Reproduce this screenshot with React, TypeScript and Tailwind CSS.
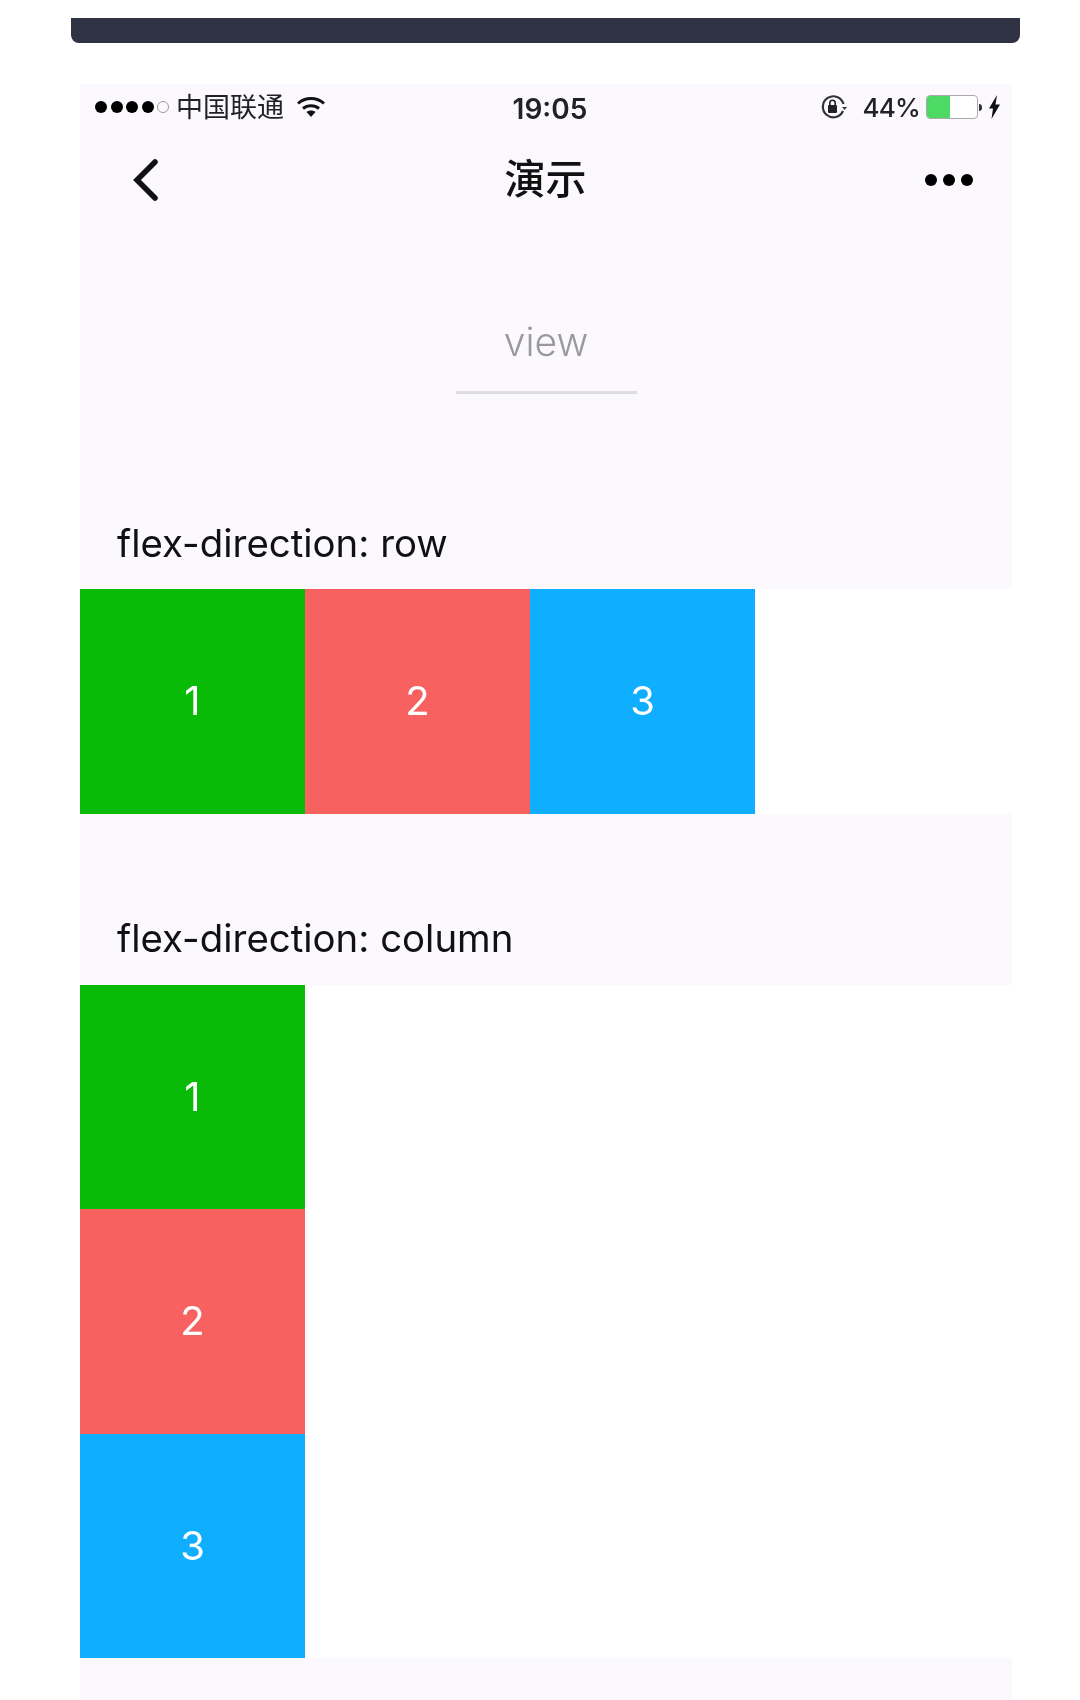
const cjk = "font-['Inter','Noto_Sans_CJK_SC',sans-serif]";

function Signal() {
	return (
		<div className="flex items-center gap-[3.5px]">
			{[0, 1, 2, 3].map((i) => (
				<span key={i} className="h-[12px] w-[12px] rounded-full bg-black" />
			))}
			<span className="h-[12px] w-[12px] rounded-full border border-[#999]" />
		</div>
	);
}

function Wifi() {
	return (
		<svg width="30" height="24" viewBox="0 0 30 24" fill="none" stroke="#111" strokeWidth="3">
			<path d="M2 8.5C9.5 1.8 20.5 1.8 28 8.5" />
			<path d="M7 13.5C11.5 9.8 18.5 9.8 23 13.5" />
			<path d="M15 22l-4.5-5c2.6-2 6.4-2 9 0z" fill="#111" stroke="none" />
		</svg>
	);
}

function RotationLock() {
	return (
		<svg width="28" height="26" viewBox="0 0 28 26" fill="none">
			<path d="M23 17A10.5 10.5 0 1 1 23.5 10" stroke="#333" strokeWidth="2.2" />
			<path d="M22 13h5l-2.5 3z" fill="#333" />
			<rect x="8" y="11" width="9" height="8" rx="1" fill="#222" />
			<path d="M9.8 11V9a2.7 2.7 0 0 1 5.4 0v2" stroke="#222" strokeWidth="1.6" />
		</svg>
	);
}

function Battery() {
	return (
		<div className="flex items-center">
			<div className="h-[24px] w-[52px] overflow-hidden rounded-[4px] border border-[#aaa] bg-white">
				<div className="h-full w-[23px] bg-[#4cd964]" />
			</div>
			<span className="ml-[1px] h-[7px] w-[3px] rounded-r-full bg-[#333]" />
		</div>
	);
}

function Bolt() {
	return (
		<svg width="13" height="24" viewBox="0 0 13 24" fill="#111">
			<path d="M9 0 1 13.5h4L3.5 24 12 9.5H7.5z" />
		</svg>
	);
}

function Cell({ n, color }: { n: number; color: string }) {
	return (
		<div className={`flex h-[224.5px] w-[225px] items-center justify-center text-[40px] text-white ${color}`}>
			<span className="blur-[0.3px]">{n}</span>
		</div>
	);
}

const cells = [
	{ n: 1, color: "bg-[#09bb07]" },
	{ n: 2, color: "bg-[#f76260]" },
	{ n: 3, color: "bg-[#10aeff]" },
];

export default function App() {
	return (
		<div className={`h-[1700px] overflow-hidden bg-white pt-[18px] ${cjk}`}>
			<div className="mx-[60px] ml-[71px] h-[25px] w-[949px] rounded-b-[8px] bg-[#2f3242]" />

			<div className="mt-[41px] ml-[80px] h-[1616px] w-[932px] bg-[#fbf9fe]">
				<div className="flex h-[46px] items-center justify-between pr-[11px] pl-[15px] blur-[0.4px]">
					<div className="flex w-[320px] items-center gap-[7px]">
						<Signal />
						<span className="text-[27px] leading-none text-[#222]">中国联通</span>
						<span className="ml-[5px]"><Wifi /></span>
					</div>
					<span className="mt-[3px] ml-[4px] text-[28px] font-semibold text-[#222]">19:05</span>
					<div className="flex w-[320px] items-center justify-end">
						<RotationLock />
						<span className="mr-[6px] ml-[14px] text-[26px] font-medium tracking-[-0.8px] text-[#222]">44%</span>
						<Battery />
						<span className="ml-[6px]"><Bolt /></span>
					</div>
				</div>

				<div className="flex h-[98px] items-center justify-between pt-[1px] pr-[39px] pl-[52px]">
					<div className="w-[100px]">
						<svg width="26" height="42" viewBox="0 0 26 42" fill="none" stroke="#111" strokeWidth="5.5" strokeLinecap="round">
							<path d="M23 3 5 21l18 18" />
						</svg>
					</div>
					<span className="ml-[-14px] text-[41px] leading-none font-medium text-[#111] blur-[0.4px]">演示</span>
					<div className="flex w-[100px] justify-end gap-[6px]">
						{[0, 1, 2].map((i) => (
							<span key={i} className="h-[12px] w-[12px] rounded-full bg-black" />
						))}
					</div>
				</div>

				<div className="flex flex-col items-center pt-[82px]">
					<div className="text-[39px] leading-[64px] font-light text-[#999] blur-[0.3px]">view</div>
					<div className="mt-[17px] h-[3px] w-[181px] bg-[#ddd]" />
				</div>

				<div className="flex h-[195px] items-end pb-[27px] pl-[37px] text-[38.4px] leading-none text-[#111] blur-[0.3px]">
					flex-direction: row
				</div>
				<div className="flex bg-white">
					{cells.map((c) => (
						<Cell key={c.n} n={c.n} color={c.color} />
					))}
				</div>

				<div className="flex h-[171px] items-end pb-[27px] pl-[37px] text-[38.4px] leading-none text-[#111] blur-[0.3px]">
					flex-direction: column
				</div>
				<div className="flex flex-col bg-white">
					{cells.map((c) => (
						<Cell key={c.n} n={c.n} color={c.color} />
					))}
				</div>
			</div>
		</div>
	);
}
